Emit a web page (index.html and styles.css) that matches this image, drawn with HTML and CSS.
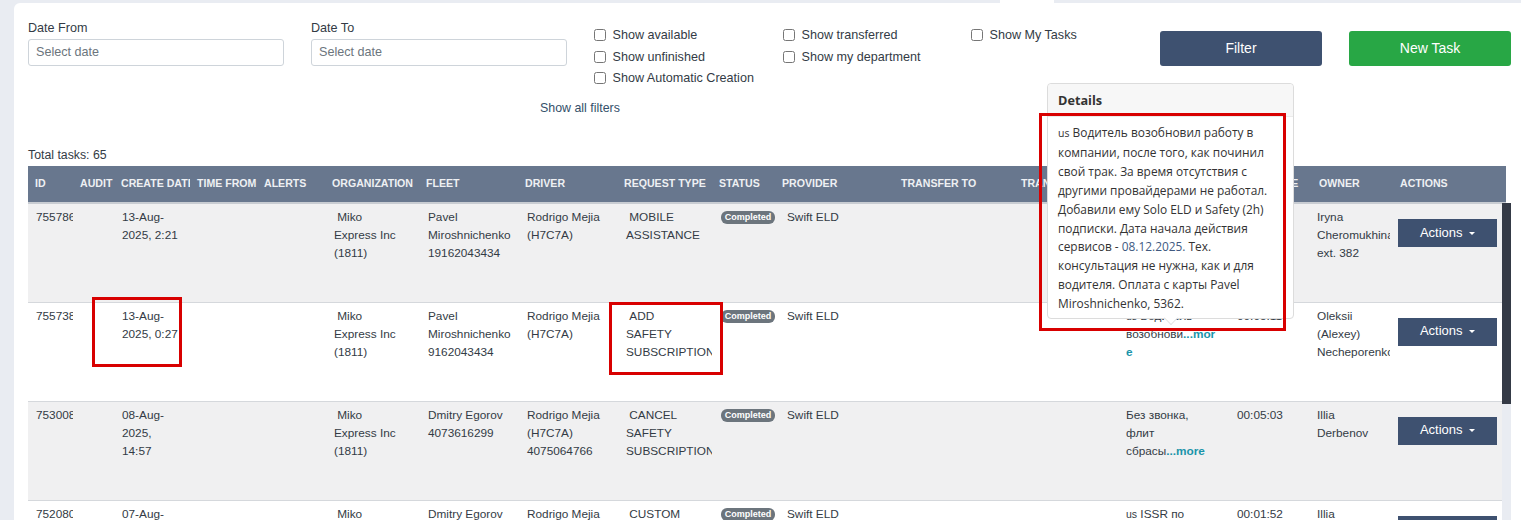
FILE: index.html
```html
<!DOCTYPE html>
<html lang="en">
<head>
    <meta charset="UTF-8">
    <title>Tasks</title>
    <link rel="stylesheet" href="styles.css">
</head>
<body>
    <div class="top-tab"></div>
    <div class="card">
        <div class="filters">
            <div class="date-field">
                <label>Date From</label>
                <input type="text" placeholder="Select date">
            </div>
            <div class="date-field">
                <label>Date To</label>
                <input type="text" placeholder="Select date">
            </div>
            <div class="checks checks-1">
                <label><input type="checkbox"> Show available</label>
                <label><input type="checkbox"> Show unfinished</label>
                <label><input type="checkbox"> Show Automatic Creation</label>
            </div>
            <div class="checks checks-2">
                <label><input type="checkbox"> Show transferred</label>
                <label><input type="checkbox"> Show my department</label>
            </div>
            <div class="checks checks-3">
                <label><input type="checkbox"> Show My Tasks</label>
            </div>
            <button class="btn btn-filter">Filter</button>
            <button class="btn btn-new">New Task</button>
        </div>
        <div class="show-all">Show all filters</div>
        <div class="total">Total tasks: 65</div>

        <div class="table-wrap">
            <table>
                <colgroup>
                    <col class="c-id"><col class="c-audit"><col class="c-date"><col class="c-time"><col class="c-alerts">
                    <col class="c-org"><col class="c-fleet"><col class="c-driver"><col class="c-type"><col class="c-status">
                    <col class="c-provider"><col class="c-transfer"><col class="c-transfer2"><col class="c-notes">
                    <col class="c-dur"><col class="c-owner"><col class="c-actions">
                </colgroup>
                <thead>
                    <tr>
                        <th>ID</th><th>AUDIT</th><th>CREATE DATE</th><th>TIME FROM</th><th>ALERTS</th>
                        <th>ORGANIZATION</th><th>FLEET</th><th>DRIVER</th><th>REQUEST TYPE</th><th>STATUS</th>
                        <th>PROVIDER</th><th>TRANSFER TO</th><th>TRANSFER</th><th>NOTES</th>
                        <th>TOTAL TIME</th><th class="th-wide">OWNER</th><th class="th-wide">ACTIONS</th>
                    </tr>
                </thead>
                <tbody>
                    <tr>
                        <td>755786</td><td></td><td>13-Aug-<br>2025, 2:21</td><td></td><td></td>
                        <td class="td-wide">&nbsp;Miko<br>Express Inc<br>(1811)</td>
                        <td class="td-wide">Pavel<br>Miroshnichenko<br>19162043434</td>
                        <td class="td-wide">Rodrigo Mejia<br>(H7C7A)</td>
                        <td class="td-wide">&nbsp;MOBILE<br>ASSISTANCE</td>
                        <td><span class="badge">Completed</span></td>
                        <td class="td-provider">Swift ELD</td><td></td><td></td><td></td><td></td>
                        <td>Iryna<br>Cheromukhina<br>ext. 382</td>
                        <td><button class="btn-actions">Actions <i class="caret"></i></button></td>
                    </tr>
                    <tr>
                        <td>755738</td><td></td><td>13-Aug-<br>2025, 0:27</td><td></td><td></td>
                        <td class="td-wide">&nbsp;Miko<br>Express Inc<br>(1811)</td>
                        <td class="td-wide">Pavel<br>Miroshnichenko<br>9162043434</td>
                        <td class="td-wide">Rodrigo Mejia<br>(H7C7A)</td>
                        <td class="td-wide">&nbsp;ADD<br>SAFETY<br>SUBSCRIPTION</td>
                        <td><span class="badge">Completed</span></td>
                        <td class="td-provider">Swift ELD</td><td></td><td></td>
                        <td><span class="us">us</span> Водитель<br>возобнови<a class="more">...mor<br>e</a></td>
                        <td>00:05:11</td>
                        <td>Oleksii<br>(Alexey)<br>Necheporenko</td>
                        <td><button class="btn-actions">Actions <i class="caret"></i></button></td>
                    </tr>
                    <tr>
                        <td>753008</td><td></td><td>08-Aug-<br>2025,<br>14:57</td><td></td><td></td>
                        <td class="td-wide">&nbsp;Miko<br>Express Inc<br>(1811)</td>
                        <td class="td-wide">Dmitry Egorov<br>4073616299</td>
                        <td class="td-wide">Rodrigo Mejia<br>(H7C7A)<br>4075064766</td>
                        <td class="td-wide">&nbsp;CANCEL<br>SAFETY<br>SUBSCRIPTION</td>
                        <td><span class="badge">Completed</span></td>
                        <td class="td-provider">Swift ELD</td><td></td><td></td>
                        <td>Без звонка,<br>флит<br>сбрасы<a class="more">...more</a></td>
                        <td>00:05:03</td>
                        <td>Illia<br>Derbenov</td>
                        <td><button class="btn-actions">Actions <i class="caret"></i></button></td>
                    </tr>
                    <tr>
                        <td>752080</td><td></td><td>07-Aug-</td><td></td><td></td>
                        <td class="td-wide">&nbsp;Miko</td>
                        <td class="td-wide">Dmitry Egorov</td>
                        <td class="td-wide">Rodrigo Mejia</td>
                        <td class="td-wide">&nbsp;CUSTOM</td>
                        <td><span class="badge">Completed</span></td>
                        <td class="td-provider">Swift ELD</td><td></td><td></td>
                        <td><span class="us">us</span> ISSR по</td>
                        <td>00:01:52</td>
                        <td>Illia</td>
                        <td><button class="btn-actions">Actions <i class="caret"></i></button></td>
                    </tr>
                </tbody>
            </table>
            <div class="scrollbar"><div class="scroll-thumb"></div></div>
        </div>
    </div>

    <div class="popover">
        <div class="popover-header">Details</div>
        <div class="popover-body"><span class="us">us</span> Водитель возобновил работу в компании, после того, как починил свой трак. За время отсутствия с другими провайдерами не работал. Добавили ему Solo ELD и Safety (2h) подписки. Дата начала действия сервисов - <span class="date-link">08.12.2025.</span> Тех. консультация не нужна, как и для водителя. Оплата с карты Pavel Miroshnichenko, 5362.</div>
        <div class="popover-arrow"></div>
    </div>

    <div class="mark mark-date"></div>
    <div class="mark mark-type"></div>
    <div class="mark mark-details"></div>
</body>
</html>
```

FILE: styles.css
```css
* {
    box-sizing: border-box;
}
html, body {
    height: 520px;
    overflow: hidden;
}
body {
    margin: 0;
    padding: 3px 0 0 14px;
    background-color: #e9ecf2;
    font-family: "Liberation Sans", Arial, sans-serif;
    font-size: 11.8px;
    line-height: 18px;
    color: #333b45;
    position: relative;
}
.top-tab {
    position: absolute;
    left: 1000px;
    top: 0;
    width: 54px;
    height: 3px;
    background-color: #fff;
}
.card {
    height: 517px;
    padding: 0 0 0 14px;
    background-color: #fff;
    border-top-left-radius: 6px;
}

/* filter row */
.filters {
    display: flex;
    height: 86px;
    padding-top: 15px;
    font-size: 12.6px;
}
.date-field {
    width: 256px;
    margin-right: 27px;
}
.date-field label {
    display: block;
    height: 21px;
    line-height: 20px;
}
.date-field input {
    width: 100%;
    height: 27px;
    padding: 0 7px 2px;
    border: 1px solid #ced4da;
    border-radius: 3px;
    font-family: inherit;
    font-size: 12.6px;
}
.date-field input::placeholder {
    color: #6c757d;
}
.checks {
    display: flex;
    flex-direction: column;
    padding-top: 6px;
}
.checks label {
    display: flex;
    align-items: center;
    height: 22px;
    white-space: pre;
}
.checks input {
    width: 12px;
    height: 12px;
    margin: 0 3px 0 0;
}
.checks-1 {
    width: 189px;
}
.checks-2 {
    width: 188px;
}
.checks-3 {
    width: 189px;
}
.btn {
    height: 35px;
    width: 162px;
    margin-top: 13px;
    padding: 0 0 2px;
    border: none;
    border-radius: 3px;
    color: #fff;
    font-family: inherit;
    font-size: 14px;
}
.btn-filter {
    background-color: #3e5170;
    margin-right: 27px;
}
.btn-new {
    background-color: #28a745;
}
.show-all {
    height: 56px;
    padding: 10px 0 0 512px;
    font-size: 12.4px;
    color: #34506a;
}
.total {
    height: 21px;
    padding-top: 1px;
    font-size: 12.3px;
}

/* tasks table */
.table-wrap {
    width: 1479px;
    position: relative;
}
table {
    width: 1478px;
    table-layout: fixed;
    border-collapse: collapse;
}
.c-id { width: 45px; }
.c-audit { width: 41px; }
.c-date { width: 76px; }
.c-time { width: 67px; }
.c-alerts { width: 68px; }
.c-org { width: 94px; }
.c-fleet { width: 99px; }
.c-driver { width: 99px; }
.c-type { width: 95px; }
.c-status { width: 63px; }
.c-provider { width: 119px; }
.c-transfer { width: 120px; }
.c-transfer2 { width: 104px; }
.c-notes { width: 111px; }
.c-dur { width: 80px; }
.c-owner { width: 81px; }
.c-actions { width: 116px; }
th {
    height: 37px;
    padding: 0 0 2px 7px;
    background-color: #68778e;
    border-bottom: 2px solid #c8ccd2;
    color: #eef0f3;
    font-size: 10.6px;
    font-weight: 700;
    text-align: left;
    white-space: nowrap;
    overflow: hidden;
}
.th-wide {
    padding-left: 10px;
}
td {
    height: 99px;
    padding: 4px 0 0 8px;
    border-bottom: 1px solid #d5d8dc;
    vertical-align: top;
    white-space: nowrap;
    overflow: hidden;
}
.td-wide {
    padding-left: 9px;
}
.td-provider {
    padding-left: 12px;
}
tbody tr:nth-child(odd) td {
    background-color: #f0f0f1;
}
.badge {
    display: inline-block;
    width: 54px;
    height: 13px;
    margin-left: 1px;
    border-radius: 6px;
    background-color: #6c757d;
    color: #fff;
    font-size: 9px;
    font-weight: 700;
    line-height: 13px;
    text-align: center;
    vertical-align: 1px;
}
.more {
    color: #1a94aa;
    font-weight: 700;
}
.us {
    font-size: 10.5px;
}
.btn-actions {
    display: block;
    width: 99px;
    height: 28px;
    margin-top: 11px;
    padding: 0 0 2px;
    border: none;
    background-color: #3e5170;
    color: #fff;
    font-family: inherit;
    font-size: 13px;
}
.caret {
    display: inline-block;
    margin-left: 3px;
    vertical-align: 2px;
    border-top: 3px solid #fff;
    border-left: 3px solid transparent;
    border-right: 3px solid transparent;
}
.scrollbar {
    position: absolute;
    top: 37px;
    right: -4px;
    width: 9px;
    height: 320px;
    background-color: #e9ecf2;
}
.scroll-thumb {
    height: 201px;
    background-color: #343a46;
}

/* popover over the table */
.popover {
    position: absolute;
    left: 1047px;
    top: 83px;
    width: 247px;
    height: 236px;
    background-color: #fff;
    border: 1px solid #dcdcdc;
    border-radius: 4px;
    font-family: "Open Sans", Arial, sans-serif;
    color: #333;
}
.popover-header {
    height: 33px;
    padding: 7px 10px;
    background-color: #f7f7f7;
    border-bottom: 1px solid #ebebeb;
    border-radius: 4px 4px 0 0;
    font-size: 12.7px;
    font-weight: 700;
}
.popover-body {
    padding: 6px 10px;
    font-size: 11.9px;
    line-height: 18.9px;
}
.date-link {
    color: #40597f;
}
.popover-arrow {
    position: absolute;
    left: 116px;
    bottom: -7px;
    width: 14px;
    height: 14px;
    background-color: #fff;
    border-right: 1px solid #dcdcdc;
    border-bottom: 1px solid #dcdcdc;
    transform: rotate(45deg) scale(.7);
}

/* red annotation boxes */
.mark {
    position: absolute;
    border: 3px solid #d80000;
}
.mark-date {
    left: 92px;
    top: 297px;
    width: 90px;
    height: 70px;
}
.mark-type {
    left: 609px;
    top: 302px;
    width: 114px;
    height: 73px;
}
.mark-details {
    left: 1039px;
    top: 113px;
    width: 247px;
    height: 218px;
}
```
